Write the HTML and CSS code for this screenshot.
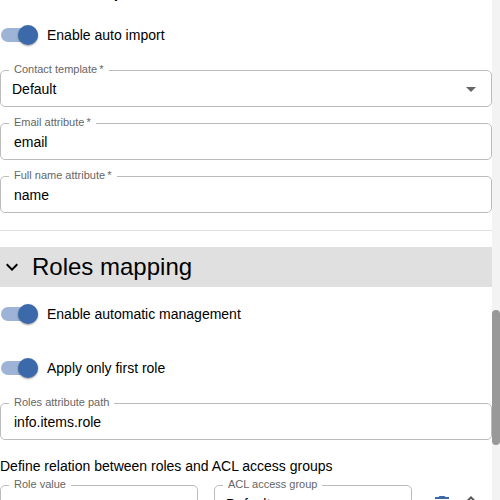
FILE: index.html
```
<!DOCTYPE html>
<html lang="en">
<head>
<meta charset="utf-8">
<meta name="viewport" content="width=device-width, initial-scale=1">
<title>Authentication</title>
<link rel="stylesheet" href="styles.css">
</head>
<body>
<div class="viewport">
<main class="form">
  <section class="group">
    <h2 class="scrolled-title">Auto import</h2>
    <label class="switch-row"><input class="switch" type="checkbox" role="switch" checked>Enable auto import</label>
    <div class="fields">
      <fieldset class="field">
        <legend><label for="template">Contact template&thinsp;*</label></legend>
        <div class="select-wrap">
          <select id="template"><option>Default</option></select>
          <svg class="caret" viewBox="0 0 24 24" aria-hidden="true"><path d="M7 10l5 5 5-5z"/></svg>
        </div>
      </fieldset>
      <fieldset class="field">
        <legend><label for="email">Email attribute&thinsp;*</label></legend>
        <input id="email" type="text" value="email">
      </fieldset>
      <fieldset class="field">
        <legend><label for="name">Full name attribute&thinsp;*</label></legend>
        <input id="name" type="text" value="name">
      </fieldset>
    </div>
  </section>
  <hr>
  <section class="group">
    <h2><button class="section-title" type="button" aria-expanded="true">
      <svg class="chevron" viewBox="0 0 24 24" aria-hidden="true"><path d="M7.41 8.59 12 13.17l4.59-4.58L18 10l-6 6-6-6z"/></svg>
      Roles mapping
    </button></h2>
    <label class="switch-row"><input class="switch" type="checkbox" role="switch" checked>Enable automatic management</label>
    <label class="switch-row"><input class="switch" type="checkbox" role="switch" checked>Apply only first role</label>
    <div class="fields">
      <fieldset class="field">
        <legend><label for="path">Roles attribute path</label></legend>
        <input id="path" type="text" value="info.items.role">
      </fieldset>
    </div>
    <p class="caption">Define relation between roles and ACL access groups</p>
    <div class="relation">
      <fieldset class="field">
        <legend><label for="role">Role value</label></legend>
        <input id="role" type="text">
      </fieldset>
      <fieldset class="field">
        <legend><label for="acl">ACL access group</label></legend>
        <select id="acl"><option>Default</option></select>
      </fieldset>
      <div class="actions">
        <button class="icon-button delete" type="button" aria-label="Delete"><svg viewBox="0 0 24 24" aria-hidden="true"><path d="M6 19c0 1.100.9 2 2 2h8c1.100 0 2-.9 2-2V7H6zM19 4h-3.500l-1-1h-5l-1 1H5v2h14z"/></svg></button>
        <button class="icon-button" type="button" aria-label="Reorder"><svg viewBox="0 0 24 24" aria-hidden="true"><path d="M12 5.830 15.170 9l1.410-1.410L12 3 7.410 7.590 8.830 9zM12 18.170 8.830 15l-1.410 1.410L12 21l4.590-4.590L15.170 15z"/></svg></button>
      </div>
    </div>
  </section>
</main>
<div class="scrollbar" aria-hidden="true"><div class="thumb"></div></div>
</div>
</body>
</html>
```
FILE: styles.css
```
* { box-sizing: border-box; }
body {
  margin: 0;
  background: #fff;
  color: #000;
  font: 14px/20px "Liberation Sans", Arial, sans-serif;
}
.viewport { display: flex; height: 100vh; overflow: hidden; }
.form { flex: 1; min-width: 0; }
h2, p { margin: 0; font-weight: 400; }
.scrolled-title {
  margin: -28px 0 4px;
  padding-left: 32px;
  font-size: 24px;
  line-height: 32px;
}
.switch-row { display: flex; align-items: center; gap: 9px; height: 54px; }
.switch {
  appearance: none;
  flex: none;
  display: flex;
  align-items: center;
  width: 37px;
  height: 14px;
  margin: 0 0 0 1px;
  border-radius: 7px;
  background: #9eb4d6;
}
.switch::before {
  content: "";
  width: 20px;
  height: 20px;
  margin-left: auto;
  border-radius: 50%;
  background: #3c69aa;
  box-shadow: 0 1px 2px rgba(0, 0, 0, .4);
}
.fields { display: flex; flex-direction: column; gap: 10px; padding-top: 2px; }
.field {
  min-width: 0;
  margin: 0;
  padding: 0 11px;
  height: 43px;
  border: 1px solid #bcbcbc;
  border-radius: 5px;
}
legend {
  margin-left: -3px;
  padding: 0 5px;
  height: 12px;
  font-size: 11px;
  line-height: 10px;
  color: #666;
}
legend label { display: block; }
.field input, .field select {
  display: block;
  width: 100%;
  height: 26px;
  padding: 0;
  border: 0;
  outline: 0;
  appearance: none;
  background: transparent;
  color: #000;
  font: inherit;
}
.field input { padding: 0 2px; }
.select-wrap { display: flex; align-items: center; }
.caret { flex: none; width: 24px; height: 24px; margin-right: -3px; fill: #666; }
hr { margin: 17px 0 16px; border: 0; border-top: 1px solid #e0e0e0; }
.section-title {
  display: flex;
  align-items: center;
  gap: 8px;
  width: 100%;
  height: 40px;
  padding: 0;
  border: 0;
  background: #e0e0e0;
  color: #000;
  font: 24px/32px "Liberation Sans", Arial, sans-serif;
}
.chevron { width: 24px; height: 24px; }
.caption { margin: 16px 0 3px; }
.relation { display: flex; gap: 16px; }
.relation .field { flex: 0 1 198px; }
.actions { display: flex; align-items: center; gap: 5px; padding: 8px 0 0 2px; }
.icon-button { padding: 0; border: 0; background: none; width: 24px; height: 24px; }
.icon-button svg { display: block; fill: #555; }
.delete svg { fill: #3c69aa; }
.scrollbar { flex: none; width: 8px; height: 100%; padding-top: 310px; background: #f3f3f3; }
.thumb { height: 135px; border-radius: 4px; background: #999; }
```
